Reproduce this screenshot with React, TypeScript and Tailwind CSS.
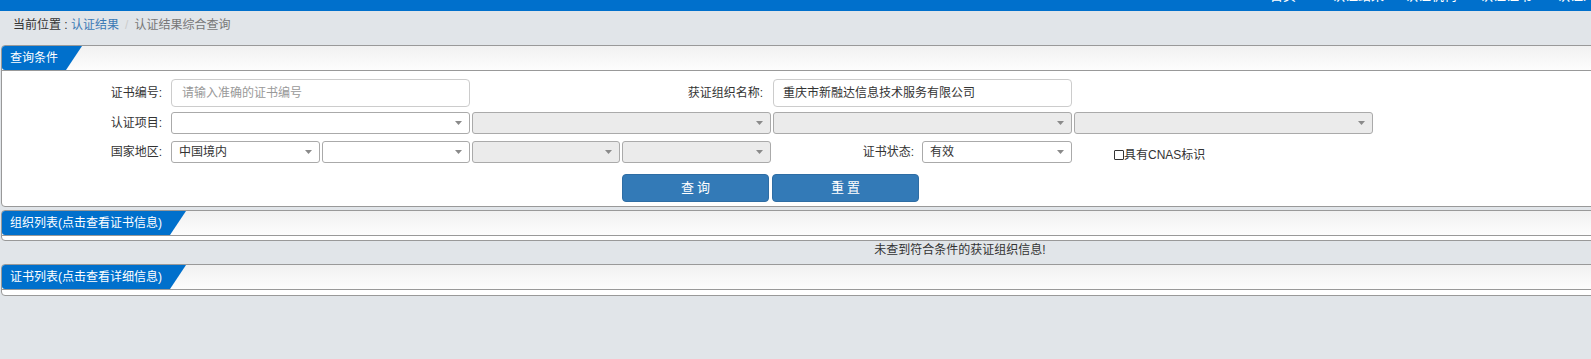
import clsx from "clsx";

const font = "font-['Liberation_Sans','Noto_Sans_CJK_SC',sans-serif]";

function Arrow() {
  return (
    <svg width="7" height="4" viewBox="0 0 7 4" className="shrink-0">
      <path d="M0 0h7L3.5 4z" fill="#8a8a8a" />
    </svg>
  );
}

function Select({
  className,
  value,
  disabled,
}: {
  className: string;
  value?: string;
  disabled?: boolean;
}) {
  return (
    <div
      className={clsx(
        "flex h-[22px] items-center justify-between rounded-[3px] border border-[#aaa] pl-[7px] pr-[7px] text-[12px] text-[#333]",
        disabled ? "bg-[#ebebeb]" : "bg-white",
        className
      )}
    >
      <span>{value}</span>
      <Arrow />
    </div>
  );
}

function Panel({
  title,
  children,
  className,
}: {
  title: string;
  children?: React.ReactNode;
  className?: string;
}) {
  return (
    <div
      className={clsx(
        "ml-px w-[1918px] rounded-[4px] border border-[#999] bg-white",
        className
      )}
    >
      <div className="flex h-[25px] rounded-t-[4px] border-b border-[#999] bg-gradient-to-b from-[#f1f1f1] to-[#fdfdfd]">
        <div className="flex items-center rounded-l-[3px] bg-[#0070cc] pl-[8px] pr-[24px] text-[12px] text-white [clip-path:polygon(0_0,100%_0,calc(100%-16px)_100%,0_100%)]">
          {title}
        </div>
      </div>
      {children}
    </div>
  );
}

export default function App() {
  const nav = [
    { label: "首页", cls: "ml-[1270px]" },
    { label: "认证结果", cls: "ml-[36px]" },
    { label: "认证机构", cls: "ml-[21px]" },
    { label: "认证证书", cls: "ml-[23px]" },
    { label: "认证人员", cls: "ml-[25px]" },
  ];

  return (
    <div className={clsx("min-h-screen w-full overflow-hidden bg-[#e1e5e9]", font)}>
      <div className="w-[1920px]">
        {/* top bar, nav text mostly scrolled out of view */}
        <div className="h-[11px] overflow-hidden bg-[#0070cc]">
          <div className="-mt-[11px] flex text-[13px] leading-[13px] text-white">
            {nav.map((n) => (
              <span key={n.label} className={n.cls}>
                {n.label}
              </span>
            ))}
          </div>
        </div>

        {/* breadcrumb */}
        <div className="h-[34px] pl-[13px] pt-[4px] text-[12px] leading-[20px]">
          <span className="text-[#333]">当前位置 : </span>
          <span className="text-[#3c7ab5]">认证结果</span>
          <span className="mx-[6px] text-[#ccc]">/</span>
          <span className="text-[#777]">认证结果综合查询</span>
        </div>

        {/* query panel */}
        <Panel title="查询条件">
          <div className="pb-[4px] pt-[8px] text-[12px] text-[#333]">
            <div className="flex h-[28px] items-center">
              <div className="w-[160px] text-right">证书编号:</div>
              <div className="ml-[9px] flex h-[28px] w-[299px] items-center rounded-[4px] border border-[#ccc] pl-[10px] text-[#999]">
                请输入准确的证书编号
              </div>
              <div className="w-[293px] text-right">获证组织名称:</div>
              <div className="ml-[10px] flex h-[28px] w-[299px] items-center rounded-[4px] border border-[#ccc] pl-[9px] text-[#333]">
                重庆市新融达信息技术服务有限公司
              </div>
            </div>

            <div className="mt-[5px] flex items-center">
              <div className="w-[160px] text-right">认证项目:</div>
              <div className="ml-[9px] flex gap-[2px]">
                <Select className="w-[299px]" />
                <Select className="w-[299px]" disabled />
                <Select className="w-[299px]" disabled />
                <Select className="w-[299px]" disabled />
              </div>
            </div>

            <div className="mt-[7px] flex h-[22px] items-center">
              <div className="w-[160px] text-right">国家地区:</div>
              <div className="ml-[9px] flex gap-[2px]">
                <Select className="w-[149px]" value="中国境内" />
                <Select className="w-[148px]" />
                <Select className="w-[148px]" disabled />
                <Select className="w-[149px]" disabled />
              </div>
              <div className="w-[143px] text-right">证书状态:</div>
              <Select className="ml-[8px] w-[150px]" value="有效" />
              <div className="ml-[42px] flex h-[22px] translate-y-[3px] items-center">
                <span className="h-[10px] w-[10px] rounded-[1px] border border-[#333] bg-white" />
                <span>具有CNAS标识</span>
              </div>
            </div>

            <div className="ml-[620px] mt-[11px] flex gap-[3px]">
              <button className="flex h-[28px] w-[147px] items-center justify-center rounded-[4px] border border-[#2e6da4] bg-[#337ab7] pl-[3px] text-[13px] tracking-[3px] text-white">
                查询
              </button>
              <button className="flex h-[28px] w-[147px] items-center justify-center rounded-[4px] border border-[#2e6da4] bg-[#337ab7] pl-[3px] text-[13px] tracking-[3px] text-white">
                重置
              </button>
            </div>
          </div>
        </Panel>

        <Panel title="组织列表(点击查看证书信息)" className="mt-[3px]">
          <div className="h-[4px]" />
        </Panel>

        <div className="h-[23px] text-center text-[12px] leading-[19px] text-[#333]">
          未查到符合条件的获证组织信息!
        </div>

        <Panel title="证书列表(点击查看详细信息)">
          <div className="h-[5px]" />
        </Panel>
      </div>
    </div>
  );
}
